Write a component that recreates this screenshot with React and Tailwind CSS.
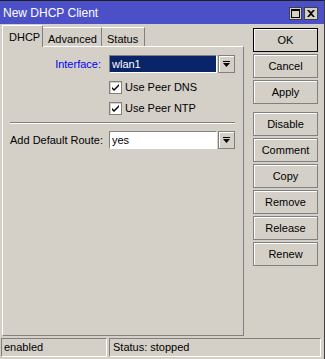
import React from 'react';

const etched = 'border border-[#808080] shadow-[inset_1px_1px_0_#ffffff]';
const sunken = 'border border-t-[#808080] border-l-[#808080] border-r-white border-b-white';

const DropButton = () => (
    <div className={`w-[17px] h-[18px] ml-[1px] bg-[#d4d0c8] flex items-center justify-center ${etched}`}>
        <svg width="7" height="7" viewBox="0 0 7 7">
            <rect x="0" y="0" width="7" height="1" fill="#000" />
            <path d="M0 2 H7 L3.5 6 Z" fill="#000" />
        </svg>
    </div>
);

const Check = ({ label }) => (
    <div className="flex items-center h-[13px] ml-[99px]">
        <div className="w-[13px] h-[13px] bg-white flex items-center justify-center border border-[#808080] shadow-[inset_1px_1px_0_#d4d0c8]">
            <svg width="9" height="9" viewBox="0 0 9 9">
                <path d="M1 4 L3 6 L8 1 L8 3 L3 8 L1 6 Z" fill="#000" />
            </svg>
        </div>
        <span className="ml-[3px]">{label}</span>
    </div>
);

const SideButton = ({ label, primary }) => (
    <div
        className={`h-[24px] flex items-center justify-center bg-[#d4d0c8] border shadow-[inset_1px_1px_0_#ffffff] ${
            primary ? 'border-black' : 'border-[#808080]'
        }`}
    >
        {label}
    </div>
);

export default function App() {
    return (
        <div
            className="w-[325px] h-[359px] bg-[#d4d0c8] flex flex-col text-[11px] text-black border-r border-[#404040]"
            style={{ fontFamily: '"Liberation Sans", Arial, sans-serif' }}
        >
            {/* Title bar */}
            <div className="h-[24px] bg-[#4c50c8] border-t border-[#202020] flex items-center justify-between pl-[3px] pr-[6px]">
                <span className="text-white text-[12px]">New DHCP Client</span>
                <div className="flex gap-[2px] mt-[2px]">
                    <div className="w-[13px] h-[13px] bg-[#d4d0c8] border border-[#404040] flex items-center justify-center">
                        <div className="w-[9px] h-[9px] border border-black border-t-2" />
                    </div>
                    <div className="w-[14px] h-[13px] bg-[#d4d0c8] border border-[#404040] flex items-center justify-center">
                        <svg width="8" height="7" viewBox="0 0 8 7">
                            <path d="M0 0 H2 L4 2 L6 0 H8 L5 3.5 L8 7 H6 L4 5 L2 7 H0 L3 3.5 Z" fill="#000" />
                        </svg>
                    </div>
                </div>
            </div>

            <div className="flex flex-1 min-h-0">
                {/* Left: tabs + panel */}
                <div className="w-[244px] pl-[2px] flex flex-col">
                    <div className="h-[22px] flex items-end">
                        <div className="w-[41px] h-[22px] pl-[6px] pt-[3px] border-t border-l border-white border-r border-r-[#808080] bg-[#d4d0c8] relative z-10 -mb-[1px]">
                            DHCP
                        </div>
                        <div className="w-[59px] h-[19px] pl-[5px] pt-[3px] border-t border-white border-r border-r-[#808080]">
                            Advanced
                        </div>
                        <div className="w-[43px] h-[19px] pl-[5px] pt-[3px] border-t border-white border-r border-r-[#808080]">
                            Status
                        </div>
                    </div>
                    <div className="flex-1 border border-t-white border-l-white border-r-[#808080] border-b-[#808080] pl-[7px] pt-[8px]">
                        <div className="flex items-center h-[18px]">
                            <span className="w-[91px] text-right text-[#0000ff]">Interface:</span>
                            <div className={`ml-[8px] w-[108px] h-[18px] bg-[#0a246a] text-white pl-[2px] flex items-center ${sunken}`}>
                                wlan1
                            </div>
                            <DropButton />
                        </div>
                        <div className="mt-[8px]">
                            <Check label="Use Peer DNS" />
                        </div>
                        <div className="mt-[8px]">
                            <Check label="Use Peer NTP" />
                        </div>
                        <div className="mt-[7px] w-[225px] h-[2px] border-t border-t-[#808080] border-b border-b-white" />
                        <div className="mt-[7px] flex items-center h-[18px]">
                            <span className="w-[91px] whitespace-nowrap">Add Default Route:</span>
                            <div className={`ml-[8px] w-[108px] h-[18px] bg-white pl-[2px] flex items-center ${sunken}`}>
                                yes
                            </div>
                            <DropButton />
                        </div>
                    </div>
                </div>

                {/* Right: buttons */}
                <div className="ml-[9px] w-[65px] pt-[4px] flex flex-col">
                    <SideButton label="OK" primary />
                    <div className="mt-[2px] flex flex-col gap-[2px]">
                        <SideButton label="Cancel" />
                        <SideButton label="Apply" />
                    </div>
                    <div className="mt-[8px] flex flex-col gap-[2px]">
                        <SideButton label="Disable" />
                        <SideButton label="Comment" />
                        <SideButton label="Copy" />
                        <SideButton label="Remove" />
                        <SideButton label="Release" />
                        <SideButton label="Renew" />
                    </div>
                </div>
            </div>

            {/* Status bar */}
            <div className="h-[19px] mt-[2px] mb-[2px] flex pl-[1px] gap-[2px]">
                <div className={`w-[106px] pl-[2px] flex items-center ${sunken}`}>enabled</div>
                <div className={`w-[212px] pl-[3px] flex items-center ${sunken}`}>Status: stopped</div>
            </div>
        </div>
    );
}
